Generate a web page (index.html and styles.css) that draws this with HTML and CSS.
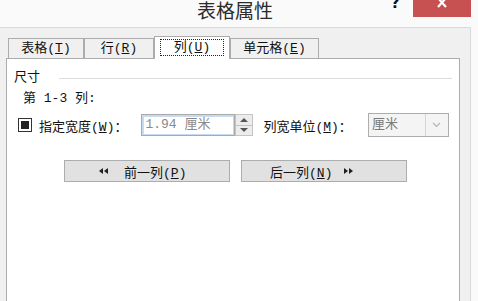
FILE: index.html
```html
<!DOCTYPE html>
<html lang="zh-CN">

<head>
    <meta charset="UTF-8">
    <title>表格属性</title>
    <link rel="stylesheet" href="styles.css">
</head>

<body>
    <div class="titlebar">
        <div class="title">表格属性</div>
        <div class="help">?</div>
        <div class="close">
            <svg width="12" height="10" viewBox="0 0 12 10">
                <path d="M2 -2 L10 7 M10 -2 L2 7" stroke="#fff" stroke-width="2.2" fill="none" />
            </svg>
        </div>
    </div>

    <div class="client">
        <div class="tabs">
            <div class="tab tab-table">表格(<u>T</u>)</div>
            <div class="tab tab-row">行(<u>R</u>)</div>
            <div class="tab tab-col active"><span class="focus">列(<u>U</u>)</span></div>
            <div class="tab tab-cell">单元格(<u>E</u>)</div>
        </div>

        <div class="panel">
            <div class="group-head">
                <span>尺寸</span>
                <span class="rule"></span>
            </div>
            <div class="cols">第 1-3 列:</div>

            <div class="size-row">
                <span class="check"><span class="mark"></span></span>
                <span class="label">指定宽度(<u>W</u>)：</span>
                <div class="spin">
                    <div class="spin-text">1.94 厘米</div>
                    <div class="spin-btns">
                        <div class="spin-up"><span class="tri up"></span></div>
                        <div class="spin-down"><span class="tri down"></span></div>
                    </div>
                </div>
                <span class="label unit-label">列宽单位(<u>M</u>)：</span>
                <div class="combo">
                    <div class="combo-text">厘米</div>
                    <div class="combo-arrow">
                        <svg width="9" height="6" viewBox="0 0 9 6">
                            <path d="M1 1 L4.5 4.5 L8 1" stroke="#b4b4b4" stroke-width="1.2" fill="none" />
                        </svg>
                    </div>
                </div>
            </div>

            <div class="nav-row">
                <button class="button prev">
                    <svg width="10" height="6" viewBox="0 0 10 6">
                        <path d="M0 3 L4 0 L4 6 Z M5 3 L9 0 L9 6 Z" fill="#222" />
                    </svg>
                    <span>前一列(<u>P</u>)</span>
                </button>
                <button class="button next">
                    <span>后一列(<u>N</u>)</span>
                    <svg width="10" height="6" viewBox="0 0 10 6">
                        <path d="M1 0 L5 3 L1 6 Z M6 0 L10 3 L6 6 Z" fill="#222" />
                    </svg>
                </button>
            </div>
        </div>
    </div>
</body>

</html>
```

FILE: styles.css
```css
body,
html {
    margin: 0;
    padding: 0;
    width: 478px;
    height: 301px;
    overflow: hidden;
    background-color: #fafafa;
    font-family: "Liberation Mono", "Noto Sans CJK SC", monospace;
    font-size: 13px;
    color: #111;
}

u {
    text-decoration: underline;
    text-underline-offset: 1px;
}

/* title bar */
.titlebar {
    position: relative;
    height: 27px;
    width: 470px;
    display: flex;
    justify-content: center;
}

.title {
    font-family: "Noto Sans CJK SC", sans-serif;
    font-size: 19px;
    line-height: 20px;
    color: #2b2b2b;
}

.help {
    position: absolute;
    left: 391px;
    top: -5px;
    font-family: "DejaVu Sans", sans-serif;
    font-weight: bold;
    font-size: 15px;
    line-height: 16px;
    color: #111;
}

.close {
    position: absolute;
    left: 413px;
    top: 0;
    width: 58px;
    height: 17px;
    background-color: #c75050;
    display: flex;
    justify-content: center;
    align-items: flex-start;
}

/* client area */
.client {
    box-sizing: border-box;
    width: 471px;
    height: 274px;
    padding-left: 6px;
    padding-right: 10px;
    border-top: 1px solid #d9d9d9;
    border-right: 1px solid #d9d9d9;
    background-color: #f0f0f0;
    display: flex;
    flex-direction: column;
}

.tabs {
    display: flex;
    align-items: flex-end;
    height: 30px;
    padding-left: 2px;
}

.tab {
    box-sizing: border-box;
    height: 20px;
    border: 1px solid #acacac;
    border-bottom: none;
    background-color: #f0f0f0;
    display: flex;
    justify-content: center;
    align-items: center;
    line-height: 16px;
    padding-top: 1px;
}

.tab-table {
    width: 76px;
}

.tab-row {
    width: 70px;
}

.tab-col {
    width: 76px;
}

.tab-cell {
    width: 89px;
}

.tab.active {
    height: 23px;
    margin-bottom: -1px;
    background-color: #fff;
    position: relative;
    z-index: 1;
    align-items: flex-start;
    padding-top: 2px;
}

.focus {
    display: block;
    width: 64px;
    height: 17px;
    box-sizing: border-box;
    border: 1px dotted #222;
    text-align: center;
    line-height: 15px;
}

.panel {
    flex: 1;
    background-color: #fff;
    border: 1px solid #acacac;
    border-bottom: none;
    padding: 10px 7px 0 7px;
}

.group-head {
    display: flex;
    align-items: center;
    height: 18px;
    line-height: 18px;
}

.rule {
    flex: 1;
    height: 1px;
    background-color: #dcdcdc;
    margin-left: 19px;
}

.cols {
    margin-top: 3px;
    line-height: 18px;
    padding-left: 9px;
}

.size-row {
    display: flex;
    align-items: center;
    height: 24px;
    margin-top: 5px;
    padding-left: 4px;
}

.check {
    box-sizing: border-box;
    width: 14px;
    height: 14px;
    border: 1px solid #333;
    display: flex;
    justify-content: center;
    align-items: center;
    margin-right: 7px;
}

.mark {
    width: 8px;
    height: 8px;
    background-color: #222;
}

.label {
    white-space: nowrap;
}

.spin {
    display: flex;
    margin-left: 14px;
    height: 22px;
}

.spin-text {
    box-sizing: border-box;
    width: 94px;
    border: 1px solid #a9a9a9;
    box-shadow: inset 2px 2px 0 #c6dbf1, inset -1px -1px 0 #c6dbf1;
    color: #8a8a8a;
    line-height: 20px;
    padding-left: 3px;
}

.spin-btns {
    width: 18px;
    display: flex;
    flex-direction: column;
}

.spin-up,
.spin-down {
    flex: 1;
    box-sizing: border-box;
    border: 1px solid #c4c4c4;
    background-color: #ececec;
    display: flex;
    justify-content: center;
    align-items: center;
}

.spin-up {
    border-bottom: none;
}

.tri {
    width: 0;
    height: 0;
    border-left: 4px solid transparent;
    border-right: 4px solid transparent;
}

.tri.up {
    border-bottom: 4px solid #555;
}

.tri.down {
    border-top: 4px solid #555;
}

.unit-label {
    margin-left: 10px;
}

.combo {
    display: flex;
    box-sizing: border-box;
    width: 81px;
    height: 24px;
    margin-left: 16px;
    border: 1px solid #adadad;
    background-color: #f4f4f4;
}

.combo-text {
    flex: 1;
    color: #7a7a7a;
    line-height: 22px;
    padding-left: 3px;
}

.combo-arrow {
    width: 22px;
    border-left: 1px solid #d4d4d4;
    display: flex;
    justify-content: center;
    align-items: center;
}

.nav-row {
    display: flex;
    gap: 11px;
    margin-top: 23px;
    padding-left: 50px;
}

.button {
    box-sizing: border-box;
    width: 166px;
    height: 22px;
    border: 1px solid #adadad;
    background-color: #e1e1e1;
    font-family: inherit;
    font-size: 13px;
    color: #111;
    display: flex;
    justify-content: flex-start;
    align-items: center;
    padding: 0;
}

.button.prev {
    padding-left: 34px;
    gap: 15px;
}

.button.next {
    padding-left: 28px;
    gap: 11px;
}
```
